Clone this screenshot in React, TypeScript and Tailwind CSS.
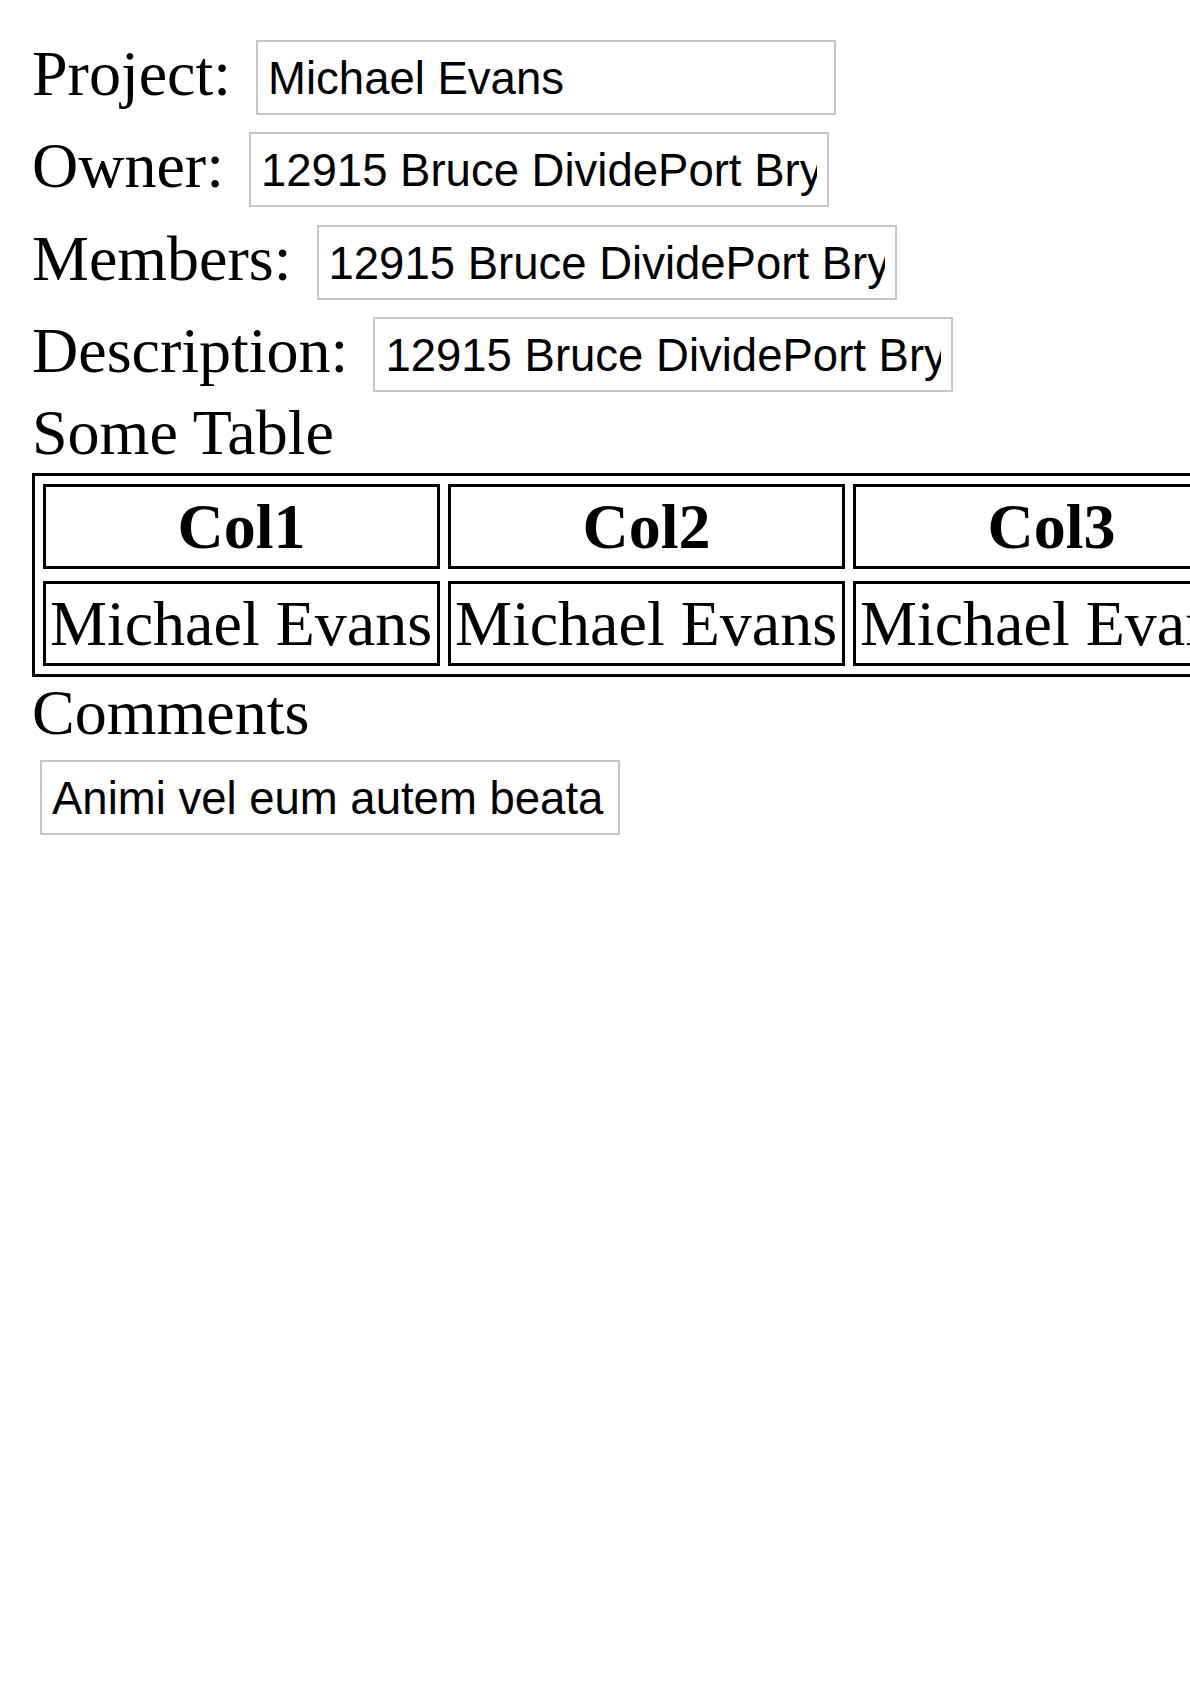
import React from "react";

const rows = [
  { label: "Project:", value: "Michael Evans" },
  { label: "Owner:", value: "12915 Bruce DividePort Bryanport" },
  { label: "Members:", value: "12915 Bruce DividePort Bryanport" },
  { label: "Description:", value: "12915 Bruce DividePort Bryanport" },
];

function Field({ value, extra = "" }: { value: string; extra?: string }) {
  return (
    <input
      type="text"
      defaultValue={value}
      readOnly
      className={`box-border h-[75px] w-[580px] shrink-0 border-2 border-[#c6c6c6] bg-white px-[10px] pt-[3px] pb-0 font-['Liberation_Sans',Arial,sans-serif] text-[45.5px] text-black outline-none ${extra}`}
    />
  );
}

export default function App() {
  const cols = ["Col1", "Col2", "Col3"];
  return (
    <div className="min-h-[1684px] w-[1190px] overflow-hidden bg-white pt-[40px] pl-[32px] font-['Liberation_Serif','Times_New_Roman',serif] text-[64px] text-black">
      <div className="flex flex-col gap-[17.33px]">
        {rows.map((r) => (
          <div key={r.label} className="flex h-[75px] items-start">
            <span className="whitespace-nowrap leading-[67px]">{r.label}</span>
            <Field value={r.value} extra="ml-[25px]" />
          </div>
        ))}
      </div>
      <div className="mt-[5px] leading-[72px]">Some Table</div>
      <div className="mt-[4px] w-max border-[3px] border-black p-[8px]">
        <div className="grid grid-cols-[397px_397px_397px] gap-x-[8px] gap-y-[12px]">
          {cols.map((c) => (
            <div
              key={c}
              className="border-[3px] border-black p-[4px] text-center font-bold leading-[71px]"
            >
              {c}
            </div>
          ))}
          {cols.map((c) => (
            <div
              key={c + "b"}
              className="whitespace-nowrap border-[3px] border-black p-[4px] text-left leading-[71px]"
            >
              Michael Evans
            </div>
          ))}
        </div>
      </div>
      <div className="pt-[7px] leading-[58px]">Comments</div>
      <div className="mt-[3px] ml-[8px]">
        <Field value="Animi vel eum autem beata" />
      </div>
    </div>
  );
}
